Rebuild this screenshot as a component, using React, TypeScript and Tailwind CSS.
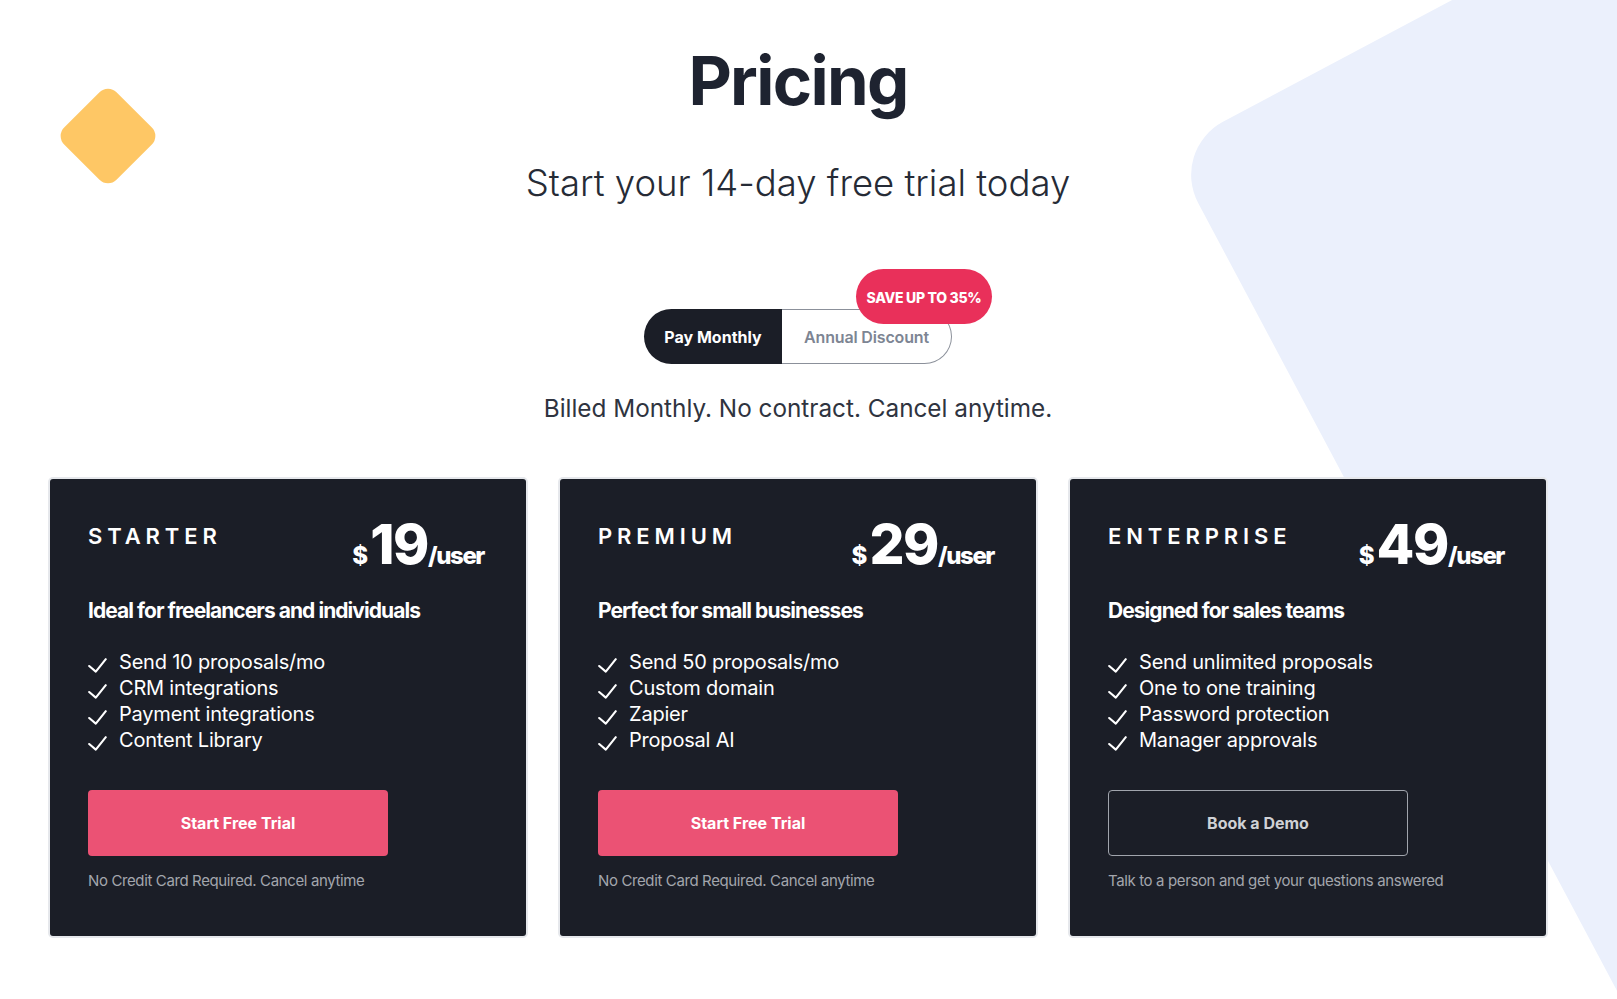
import React from "react";

type Plan = {
  name: string;
  price: string;
  tagline: string;
  features: string[];
  cta: string;
  primary: boolean;
  note: string;
};

const plans: Plan[] = [
  {
    name: "STARTER",
    price: "19",
    tagline: "Ideal for freelancers and individuals",
    features: ["Send 10 proposals/mo", "CRM integrations", "Payment integrations", "Content Library"],
    cta: "Start Free Trial",
    primary: true,
    note: "No Credit Card Required. Cancel anytime",
  },
  {
    name: "PREMIUM",
    price: "29",
    tagline: "Perfect for small businesses",
    features: ["Send 50 proposals/mo", "Custom domain", "Zapier", "Proposal AI"],
    cta: "Start Free Trial",
    primary: true,
    note: "No Credit Card Required. Cancel anytime",
  },
  {
    name: "ENTERPRISE",
    price: "49",
    tagline: "Designed for sales teams",
    features: ["Send unlimited proposals", "One to one training", "Password protection", "Manager approvals"],
    cta: "Book a Demo",
    primary: false,
    note: "Talk to a person and get your questions answered",
  },
];

function Check() {
  return (
    <svg width="19" height="15" viewBox="0 0 19 15" className="mt-[9px] shrink-0" fill="none">
      <path d="M1.2 8 L7.8 13.6 L17.8 1.2" stroke="#ffffff" strokeWidth="2.1" strokeLinecap="round" strokeLinejoin="round" />
    </svg>
  );
}

function Card({ plan }: { plan: Plan }) {
  return (
    <div className="w-[476px] h-[457px] rounded-[3px] bg-[#1b1e27] ring-2 ring-[#e6e8ec] pl-[38px] pr-[42px] pt-[38px]">
      <div className="flex items-start justify-between">
        <h3 className="mt-[5px] text-[22px] leading-[28px] font-semibold tracking-[4.9px] text-white">{plan.name}</h3>
        <div className="flex items-baseline font-bold leading-none text-white">
          <span className="text-[24px] font-extrabold mr-[2px]">$</span>
          <span className="text-[55px] font-extrabold tracking-[-0.025em]">{plan.price}</span>
          <span className="text-[24px] font-extrabold tracking-[-0.06em]">/user</span>
        </div>
      </div>
      <p className="mt-[25px] text-[21px] leading-[28px] font-bold tracking-[-0.045em] text-white">{plan.tagline}</p>
      <ul className="mt-[24px] flex flex-col">
        {plan.features.map((f) => (
          <li key={f} className="flex items-start gap-[12px] text-[20px] leading-[26px] tracking-[-0.01em] text-white">
            <Check />
            <span>{f}</span>
          </li>
        ))}
      </ul>
      <button
        className={
          plan.primary
            ? "mt-[37px] flex h-[66px] w-[300px] items-center justify-center rounded-[4px] bg-[#eb5274] text-[16px] font-bold text-white"
            : "mt-[37px] flex h-[66px] w-[300px] items-center justify-center rounded-[4px] border border-[#a1a5ad] text-[16px] font-bold text-[#cfd1d5]"
        }
      >
        {plan.cta}
      </button>
      <p className="mt-[15px] text-[15px] leading-[20px] tracking-[-0.025em] text-[#a3a6ad]">{plan.note}</p>
    </div>
  );
}

export default function App() {
  return (
    <div className="relative min-h-screen w-full overflow-hidden bg-white font-[Inter,sans-serif]">
      <div className="absolute left-[1170px] top-[150px] h-[1400px] w-[1400px] origin-top-left rotate-[-28deg] rounded-[60px] bg-[#ebf0fc]" />
      <div className="absolute left-[71px] top-[99px] h-[74px] w-[74px] rotate-45 rounded-[12px] bg-[#fec765]" />

      <div className="relative flex w-[1596px] flex-col items-center">
        <h1 className="mt-[47px] text-[67px] font-bold leading-none tracking-[-0.025em] text-[#1e2330]">Pricing</h1>
        <p className="mt-[51px] text-[36.5px] font-light leading-none text-[#262b36]">Start your 14-day free trial today</p>

        <div className="relative mt-[107px] flex">
          <div className="flex h-[55px] w-[138px] items-center justify-center rounded-l-full bg-[#1b1e27] pt-[2px] text-[16px] font-bold text-white">
            Pay Monthly
          </div>
          <div className="flex h-[55px] w-[170px] items-center justify-center rounded-r-full border border-l-0 border-[#8b909a] bg-white pt-[2px] text-[16px] font-semibold tracking-[-0.01em] text-[#7d8593]">
            Annual Discount
          </div>
          <div className="absolute left-[212px] top-[-40px] flex h-[55px] w-[136px] items-center justify-center rounded-full bg-[#e9305a] pt-[3px] text-[14px] font-extrabold tracking-[-0.02em] text-white">
            SAVE UP TO 35%
          </div>
        </div>

        <p className="mt-[32px] text-[24.3px] leading-none text-[#2f3440]">Billed Monthly. No contract. Cancel anytime.</p>

        <div className="mt-[59px] flex gap-[34px]">
          {plans.map((p) => (
            <Card key={p.name} plan={p} />
          ))}
        </div>
      </div>
    </div>
  );
}
